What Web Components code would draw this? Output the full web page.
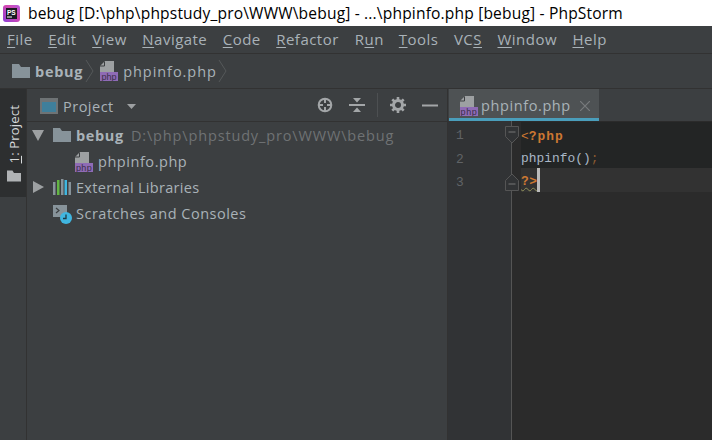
<!DOCTYPE html>
<html><head><meta charset="utf-8"><style>
html,body{margin:0;padding:0;width:712px;height:440px;overflow:hidden;background:#3c3f41}
</style></head><body>
<ide-app></ide-app>
<script>
const FONT='"Open Sans","Noto Sans",sans-serif';
const PHP=()=>`<svg width="18" height="20" viewBox="0 0 18 20" style="display:block;flex:none"><path d="M5 0h9v11H0V5z" fill="#9da0a2"/><path d="M4.500 0.500v4.500H0" fill="none" stroke="#3c3f41"/><rect x="0" y="11" width="18" height="9" fill="#8f6bb5"/><text x="9" y="18.500" text-anchor="middle" font-family="Liberation Sans,sans-serif" font-size="9" fill="#3a2f48">php</text></svg>`;
const FOLDER=(c='#87939a',w=18,h=14)=>`<svg width="${w}" height="${h}" viewBox="0 0 18 14" style="display:block;flex:none"><path d="M0 0h7l2 3h9v11H0z" fill="${c}"/></svg>`;
function def(name,html){customElements.define(name,class extends HTMLElement{constructor(){super();this.attachShadow({mode:'open'}).innerHTML=typeof html==='function'?html(this):html;}})}

def('title-bar',`<style>:host{display:flex;align-items:center;height:26px;background:#fff;color:#000;font:15.600px ${FONT};flex:none;white-space:nowrap}
.i{margin:0 8px 0 3px;flex:none;display:block}.t{letter-spacing:.155px}</style>
<svg class="i" width="17" height="17" viewBox="0 0 17 17"><defs><linearGradient id="g" x1="0" y1="1" x2="1" y2="0"><stop offset="0" stop-color="#8b3dd8"/><stop offset=".6" stop-color="#d548b0"/><stop offset="1" stop-color="#b05ae0"/></linearGradient></defs><rect width="17" height="17" rx="3" fill="url(#g)"/><rect x="3" y="3" width="11" height="11" fill="#1a1a22"/><text x="4" y="10" font-family="Liberation Sans,sans-serif" font-weight="700" font-size="6.500" fill="#fff">PS</text><rect x="4" y="11.500" width="5" height="1" fill="#fff"/></svg>
<span class="t">bebug [D:\\php\\phpstudy_pro\\WWW\\bebug] - ...\\phpinfo.php [bebug] - PhpStorm</span>`);

def('menu-bar',`<style>:host{display:flex;height:27px;flex:none;background:#3c3f41;color:#a9b2b8;font:15px ${FONT};align-items:center;padding:0 0 0 7px;box-sizing:border-box;letter-spacing:.47px;white-space:nowrap}
span{margin-right:15.500px;padding-bottom:1px}u{text-underline-offset:2px}
</style>
<span><u>F</u>ile</span><span><u>E</u>dit</span><span><u>V</u>iew</span><span><u>N</u>avigate</span><span><u>C</u>ode</span><span style="margin-right:16px"><u>R</u>efactor</span><span style="margin-right:15px">R<u>u</u>n</span><span><u>T</u>ools</span><span>VC<u>S</u></span><span><u>W</u>indow</span><span><u>H</u>elp</span>`);

const CHEV=`<svg width="9" height="22" viewBox="0 0 9 22" style="display:block;flex:none"><path d="M1 0l7 11-7 11" fill="none" stroke="#55585a"/></svg>`;
def('crumb-bar',`<style>:host{display:flex;align-items:center;height:36px;flex:none;background:#3c3f41;border-top:1px solid #323232;border-bottom:1px solid #323232;box-sizing:border-box;color:#a9b2b8;font:14.500px ${FONT};padding-left:12px}
b{margin:0 2px 0 5px;font-weight:700;letter-spacing:.7px}.p{margin:0 1px 0 5px;letter-spacing:.95px}</style>
${FOLDER('#87939a',18,14)}<b>bebug</b>${CHEV}<span style="width:6px"></span>${PHP()}<span class="p">phpinfo.php</span>${CHEV}`);

def('tool-strip',`<style>:host{display:block;width:26px;flex:none;background:#3c3f41;border-right:1px solid #323232}
.tab{height:108px;background:#2d2f30;display:flex;flex-direction:column-reverse;align-items:center;padding:0 0 15px 1px;box-sizing:border-box;gap:7px}
.v{writing-mode:vertical-rl;transform:rotate(180deg);color:#d6d9db;font:13.200px ${FONT};white-space:nowrap;letter-spacing:.1px}</style>
<div class="tab">${FOLDER('#b0b3b5',14,12)}<span class="v"><u>1</u>: Project</span></div>`);

const ICON_TARGET=`<svg width="16" height="16" viewBox="0 0 16 16" style="display:block"><circle cx="8" cy="8" r="6.300" fill="none" stroke="#a3a6a8" stroke-width="2"/><path d="M8 1v5M8 10v5M1 8h5M10 8h5" stroke="#a3a6a8" stroke-width="2"/></svg>`;
const ICON_COLLAPSE=`<svg width="16" height="16" viewBox="0 0 16 16" style="display:block"><path d="M0 8h16" stroke="#a3a6a8" stroke-width="2"/><path d="M4 1h8L8 5.500zM4 15h8l-4-4.500z" fill="#a3a6a8"/></svg>`;
const ICON_GEAR=`<svg width="16" height="16" viewBox="0 0 16 16" style="display:block"><circle cx="8" cy="8" r="4.500" fill="none" stroke="#a3a6a8" stroke-width="3"/><path d="M8 0v3M8 13v3M0 8h3M13 8h3M2.300 2.300l2.200 2.200M11.500 11.500l2.200 2.200M13.700 2.300l-2.200 2.200M4.500 11.500l-2.200 2.200" stroke="#a3a6a8" stroke-width="2.600"/></svg>`;
def('project-head',`<style>:host{display:flex;align-items:center;height:33px;flex:none;box-sizing:border-box;border-bottom:1px solid #323232;color:#a9b2b8;font:14.500px ${FONT};padding:2px 0 0 13px;letter-spacing:.5px}
.w{margin-right:5px;flex:none;display:block}.c{margin-left:13px;display:block;flex:none}.sp{flex:1}
.a{display:flex;align-items:center;padding-right:9px;margin-top:-2px}.sep{width:1px;height:24px;background:#4d5052;margin:0 12px}</style>
<svg class="w" width="18" height="16" viewBox="0 0 18 16"><rect x="1" y="1" width="16" height="14" fill="#3f7f9b" stroke="#6e7375" stroke-width="2"/><rect x="2" y="2" width="14" height="2" fill="#6e7375"/></svg>
<span>Project</span>
<svg class="c" width="9" height="5" viewBox="0 0 9 5"><path d="M0 0h9L4.500 5z" fill="#9da0a2"/></svg>
<span class="sp"></span>
<span class="a">${ICON_TARGET}<span style="width:16px"></span>${ICON_COLLAPSE}<span class="sep"></span>${ICON_GEAR}<span style="width:16px"></span><svg width="16" height="3" viewBox="0 0 16 3" style="display:block"><rect width="16" height="2" y=".5" fill="#a3a6a8"/></svg></span>`);

def('tree-row',el=>{
 const ind=+el.getAttribute('indent')||0;
 return `<style>:host{display:flex;align-items:center;height:26px;color:#a9b2b8;font:14.500px ${FONT};white-space:nowrap;letter-spacing:.3px}
 .ar{width:14px;height:14px;flex:none;margin-left:4px;margin-right:8px;display:flex;align-items:center;justify-content:center}
 ::slotted(*){display:block;flex:none}</style>
 <span style="width:${ind}px;flex:none"></span><span class="ar"><slot name="arrow"></slot></span><slot name="icon"></slot><slot></slot>`;
});

def('project-panel',`<style>:host{display:flex;flex-direction:column;flex:1;min-width:0;background:#3c3f41;overflow:hidden}
.tree{display:flex;flex-direction:column}
b{font-weight:700;margin-left:5px;letter-spacing:.65px}.g{color:#6f7274;margin-left:7px;letter-spacing:.85px}.t{margin-left:5px}</style>
<project-head></project-head>
<div class="tree">
<tree-row><svg slot="arrow" width="12" height="11" viewBox="0 0 12 11"><path d="M0 0h12L6 11z" fill="#9da0a2"/></svg><span slot="icon">${FOLDER('#87939a',18,14)}</span><b>bebug</b><span class="g">D:\\php\\phpstudy_pro\\WWW\\bebug</span></tree-row>
<tree-row indent="22"><span slot="icon" style="margin-top:1px">${PHP()}</span><span class="t" style="letter-spacing:.55px">phpinfo.php</span></tree-row>
<tree-row><svg slot="arrow" width="11" height="12" viewBox="0 0 11 12"><path d="M0 0l11 6-11 6z" fill="#9da0a2"/></svg><svg slot="icon" width="18" height="16" viewBox="0 0 18 16"><rect x="0" y="3" width="2.500" height="13" fill="#87939a"/><rect x="4" y="1" width="2.500" height="15" fill="#62b543"/><rect x="8" y="0" width="2.500" height="16" fill="#87939a"/><rect x="11.500" y="1" width="2.500" height="15" fill="#40b6e0"/><rect x="15.500" y="3" width="2.500" height="13" fill="#87939a"/></svg><span class="t">External Libraries</span></tree-row>
<tree-row><span slot="icon"><svg width="19" height="19" viewBox="0 0 19 19" style="display:block;margin-top:2px"><path d="M0 0h14v12H0z" fill="#87939a"/><path d="M3 3l3 2.500-3 2.500" fill="none" stroke="#3c3f41" stroke-width="1.200"/><circle cx="13" cy="13" r="6" fill="#40b6e0"/><path d="M13 9.500V13.500H10" fill="none" stroke="#1f3a45" stroke-width="1.300"/></svg></span><span class="t" style="margin-left:4px;letter-spacing:.5px">Scratches and Consoles</span></tree-row>
</div>`);

def('editor-tabs',`<style>:host{display:flex;height:32px;flex:none;box-sizing:border-box;background:#3c3f41}
.tab{width:150px;margin-left:1px;box-sizing:border-box;background:#4e5254;border-bottom:3px solid #4a9ebb;display:flex;align-items:center;padding:4px 0 0 11px;color:#a9b2b8;font:14.500px ${FONT};letter-spacing:.6px;white-space:nowrap}
.n{margin-left:3px}.x{margin-left:9px;display:block;flex:none}</style>
<div class="tab">${PHP()}<span class="n">phpinfo.php</span><svg class="x" width="10" height="10" viewBox="0 0 10 10"><path d="M0 0l10 10M10 0L0 10" stroke="#787b7d" stroke-width="1.200"/></svg></div>`);

def('code-editor',`<style>:host{display:flex;flex:1;min-height:0;background:#2b2b2b;position:relative;font:12.900px "Liberation Mono","DejaVu Sans Mono",monospace;overflow:hidden}
.g{width:64px;flex:none;background:#313335;border-right:1px solid #555;box-sizing:border-box;color:#606366;padding:3px 0 0 8px}
.n{height:23.500px;line-height:23.500px}
.c{flex:1;min-width:0;margin-left:9px;padding-top:1px;color:#a9b7c6}
.l{height:23px;line-height:29px;display:flex;white-space:pre}
.dk{background:#232525}.cur{background:#323232;height:24px;line-height:27px}
.k{color:#cc7832;font-weight:700;letter-spacing:1px}.o{color:#cc7832}
.caret{display:inline-block;width:3px;height:24px;background:#bbb}
.sq{text-decoration:underline wavy #8f8f5a 1px;text-underline-offset:2px;color:#cc7832;font-weight:700;letter-spacing:.4px}
.f{position:absolute;left:57px;display:block}</style>
<div class="g"><div class="n">1</div><div class="n">2</div><div class="n">3</div></div>
<div class="c"><div class="l dk"><span class="o">&lt;</span><span class="k">?php</span></div><div class="l dk" style="line-height:27px">phpinfo()<span style="color:#8a5a30">;</span></div><div class="l cur"><span class="sq">?&gt;</span><span class="caret"></span></div></div>
<svg class="f" style="top:5px" width="14" height="18" viewBox="0 0 14 18"><path d="M.5.5h13v10L7 17 .5 10.500z" fill="#313335" stroke="#555"/><path d="M3.500 6h7" stroke="#777"/></svg>
<svg class="f" style="top:52px" width="14" height="18" viewBox="0 0 14 18"><path d="M.5 17.500h13v-10L7 1 .5 7.500z" fill="#313335" stroke="#555"/><path d="M3.500 11h7" stroke="#777"/></svg>`);

def('editor-pane',`<style>:host{display:flex;flex-direction:column;width:264px;flex:none;background:#2b2b2b;border-left:1px solid #323232}</style><editor-tabs></editor-tabs><code-editor></code-editor>`);

def('ide-app',`<style>:host{display:flex;flex-direction:column;width:712px;height:440px;background:#3c3f41;overflow:hidden}
.m{display:flex;flex:1;min-height:0}</style>
<title-bar></title-bar><menu-bar></menu-bar><crumb-bar></crumb-bar>
<div class="m"><tool-strip></tool-strip><project-panel></project-panel><editor-pane></editor-pane></div>`);
</script></body></html>
